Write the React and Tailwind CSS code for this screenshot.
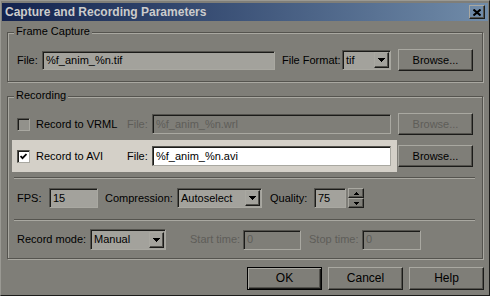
import React from "react";

// win classic bevels, darkened theme
const raised =
  "border border-t-[#a9a8a1] border-l-[#a9a8a1] border-r-[#1b1b19] border-b-[#1b1b19] shadow-[inset_-1px_-1px_0_#53524d]";
const sunken =
  "border border-t-[#53524d] border-l-[#53524d] border-r-[#a9a8a1] border-b-[#a9a8a1] shadow-[inset_1px_1px_0_#1b1b19]";
const dim = "text-[#5e5d58]";

const Arrow = ({ w = 7, h = 4 }) => (
  <svg width={w} height={h} viewBox={`0 0 ${w} ${h}`} shapeRendering="crispEdges">
    <polygon points={`0,0 ${w},0 ${w / 2},${h}`} fill="#000" />
  </svg>
);

const UpArrow = () => (
  <svg width="5" height="3" viewBox="0 0 5 3" shapeRendering="crispEdges">
    <polygon points="2.5,0 5,3 0,3" fill="#000" />
  </svg>
);

const Button = ({ children, className = "", disabled }) => (
  <div className={`${raised} flex items-center justify-center ${disabled ? dim : "text-black"} ${className}`}>
    {children}
  </div>
);

const Input = ({ value, className = "", disabled }) => (
  <div className={`${sunken} flex items-center pl-[3px] ${disabled ? dim : "text-black"} ${className}`}>
    {value}
  </div>
);

const Select = ({ value, className = "" }) => (
  <div className={`${sunken} bg-[#a3a29c] flex items-center pl-[3px] pr-[1px] ${className}`}>
    <span className="flex-1">{value}</span>
    <div className={`${raised} w-[15px] h-[16px] flex items-center justify-center`}>
      <Arrow />
    </div>
  </div>
);

const Checkbox = ({ checked }) => (
  <div
    className={`${sunken} w-[13px] h-[13px] flex items-center justify-center ${
      checked ? "bg-white" : "bg-[#92918b]"
    }`}
  >
    {checked && (
      <svg width="7" height="7" viewBox="0 0 7 7">
        <polyline points="0.5,3 2.5,5.2 6.5,1" fill="none" stroke="#000" strokeWidth="1.8" />
      </svg>
    )}
  </div>
);

const Group = ({ label, className = "", children }) => (
  <div
    className={`relative border border-[#55544f] shadow-[1px_1px_0_#a9a8a1,inset_1px_1px_0_#a9a8a1] ${className}`}
  >
    <span className="absolute -top-[8px] left-[6px] px-[2px] bg-[#7f7e78] leading-[13px]">{label}</span>
    {children}
  </div>
);

const Separator = () => (
  <div className="ml-[6px] w-[461px] h-[2px] border-t border-t-[#55544f] border-b border-b-[#a9a8a1]" />
);

const App = () => {
  return (
    <div className="w-[490px] h-[296px] bg-[#7f7e78] border border-t-[#9a9993] border-l-[#9a9993] border-r-[#1b1b19] border-b-[#1b1b19] pt-[2px] px-[1px] flex flex-col font-['Liberation_Sans',Arial,sans-serif] text-[11px] leading-[13px] text-black overflow-hidden">
      {/* Title bar */}
      <div className="h-[18px] flex items-center bg-linear-to-r from-[#14234e] to-[#718ca9] pl-[3px] pr-[3px]">
        <span className="flex-1 font-bold text-[12px] text-[#cccccc]">Capture and Recording Parameters</span>
        <div className={`${raised} w-[16px] h-[14px] flex items-center justify-center`}>
          <svg width="8" height="7" viewBox="0 0 8 7">
            <path d="M0.5 0.5L7.5 6.5M7.5 0.5L0.5 6.5" stroke="#000" strokeWidth="2" />
          </svg>
        </div>
      </div>

      {/* Frame Capture */}
      <Group label="Frame Capture" className="mt-[11px] ml-[5px] w-[476px] h-[50px] pt-[16px] pl-[9px]">
        <div className="flex items-center h-[22px]">
          <span className="w-[25px]">File:</span>
          <Input value="%f_anim_%n.tif" className="w-[233px] h-[19px] bg-[#a3a29c]" />
          <span className="ml-[7px] w-[60px]">File Format:</span>
          <Select value="tif" className="w-[49px] h-[20px]" />
          <Button className="ml-[7px] w-[75px] h-[22px]">Browse...</Button>
        </div>
      </Group>

      {/* Recording */}
      <Group label="Recording" className="mt-[14px] ml-[5px] w-[476px] h-[163px] pt-[16px]">
        <div className="flex items-center h-[22px] pl-[9px]">
          <div className="w-[110px] flex items-center">
            <Checkbox />
            <span className="ml-[6px]">Record to VRML</span>
          </div>
          <span className={`w-[25px] ${dim}`}>File:</span>
          <Input value="%f_anim_%n.wrl" disabled className="w-[239px] h-[20px]" />
          <Button disabled className="ml-[7px] w-[75px] h-[22px]">Browse...</Button>
        </div>

        <div className="flex items-center mt-[5px] pl-[4px]">
          <div className="w-[385px] h-[32px] bg-[#d4d0c8] flex items-center pl-[5px]">
            <div className="w-[110px] flex items-center">
              <Checkbox checked />
              <span className="ml-[6px]">Record to AVI</span>
            </div>
            <span className="w-[25px]">File:</span>
            <Input value="%f_anim_%n.avi" className="w-[239px] h-[20px] bg-white" />
          </div>
          <Button className="ml-[1px] w-[75px] h-[22px]">Browse...</Button>
        </div>

        <div className="mt-[5px]">
          <Separator />
        </div>

        <div className="flex items-center h-[20px] mt-[9px] pl-[9px]">
          <span className="w-[32px]">FPS:</span>
          <Input value="15" className="w-[49px] h-[20px] bg-[#a3a29c]" />
          <span className="ml-[7px] w-[72px]">Compression:</span>
          <Select value="Autoselect" className="w-[85px] h-[20px]" />
          <span className="ml-[8px] w-[44px]">Quality:</span>
          <Input value="75" className="w-[32px] h-[20px] bg-[#a3a29c]" />
          <div className="ml-[2px] w-[16px] flex flex-col">
            <div className={`${raised} h-[10px] flex items-center justify-center`}>
              <UpArrow />
            </div>
            <div className={`${raised} h-[10px] flex items-center justify-center`}>
              <Arrow w={5} h={3} />
            </div>
          </div>
        </div>

        <div className="mt-[11px]">
          <Separator />
        </div>

        <div className="flex items-center h-[21px] mt-[8px] pl-[9px]">
          <span className="w-[73px]">Record mode:</span>
          <Select value="Manual" className="w-[76px] h-[21px]" />
          <span className={`ml-[24px] w-[53px] ${dim}`}>Start time:</span>
          <Input value="0" disabled className="w-[58px] h-[20px]" />
          <span className={`ml-[8px] w-[53px] ${dim}`}>Stop time:</span>
          <Input value="0" disabled className="w-[59px] h-[20px]" />
        </div>
      </Group>

      {/* Dialog buttons */}
      <div className="flex gap-[6px] mt-[8px] pl-[245px]">
        <div className="w-[75px] h-[23px] border border-black shadow-[inset_1px_1px_0_#a9a8a1,inset_-1px_-1px_0_#1b1b19,inset_-2px_-2px_0_#53524d] flex items-center justify-center text-[12px]">
          OK
        </div>
        <Button className="w-[75px] h-[23px] text-[12px]">Cancel</Button>
        <Button className="w-[75px] h-[23px] text-[12px]">Help</Button>
      </div>
    </div>
  );
};

export default App;
